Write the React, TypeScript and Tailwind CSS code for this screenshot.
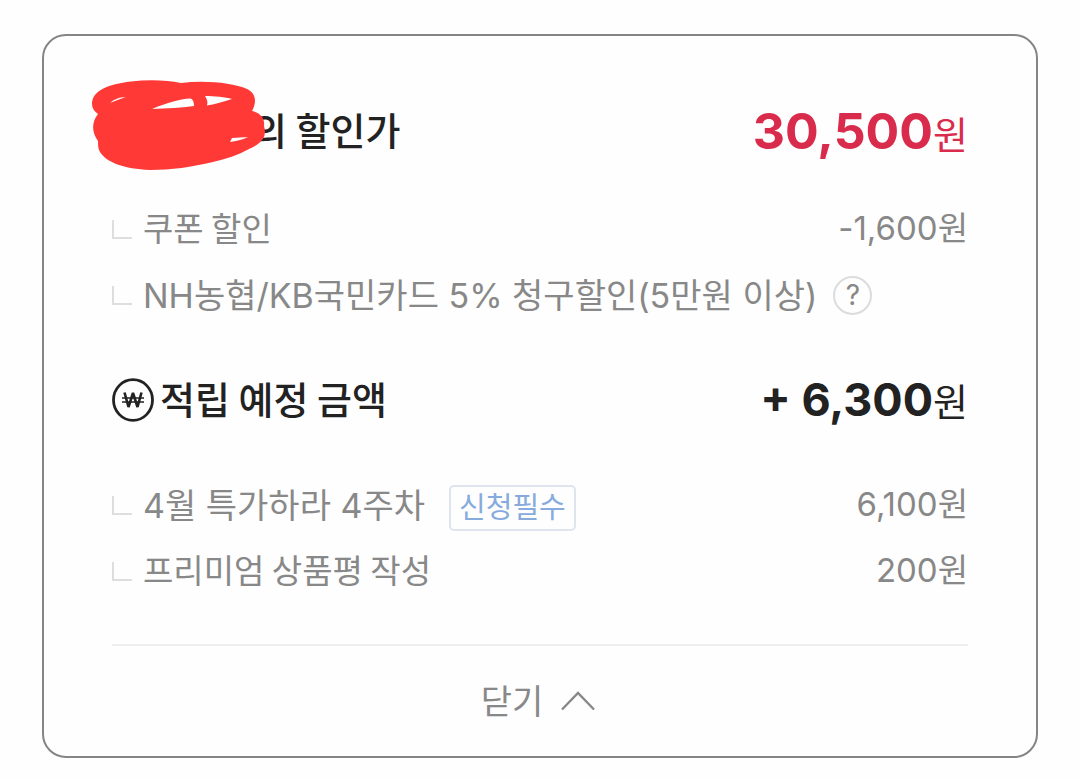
import type { ReactNode } from "react";

function DetailRow({ label, amount, children }: { label: ReactNode; amount?: string; children?: ReactNode }) {
  return (
    <li className="flex h-[66px] items-center text-[34px] font-normal text-[#888888]">
      <span aria-hidden="true" className="mr-[11px] h-[19px] w-5 shrink-0 border-b-2 border-l-2 border-[#dedede]" />
      {label}
      {children}
      {amount && <span className="ml-auto text-[33px]">{amount}</span>}
    </li>
  );
}

function Scribble() {
  return (
    <svg aria-hidden="true" viewBox="0 0 176 92" className="absolute -left-[21px] -top-[18px] h-[92px] w-[176px]">
      <path
        fillRule="evenodd"
        fill="#ff3936"
        d="M1 24C1 11 17 4 40 1.500C57-.5 76 0 90 3C115 0 142 3 156 9C165 13 166 22 161 31C170 33 174 39 173 46C176 56 172 63 158 69C147 75 135 79 122 82C101 87 80 90 59 90C33 89 15 82 9 72C7 69 7 65 7 61C1 53 0 43 7 34C3 31 1 28 1 24ZM61 29C75 23 89 19 99 18.500C102 19 103 22 103 26C90 28 76 28 61 29ZM114 16C124 16 134 17 141 19C134 21 125 24 116 25.500C117 22 116 19 114 16ZM141 58L157 57C151 60 145 61 139 62ZM19 23C22 20 28 17 35 17C29 19 24 21 19 23Z"
      />
    </svg>
  );
}

function WonIcon() {
  return (
    <svg aria-hidden="true" viewBox="0 0 42 44" className="mr-1.5 h-11 w-[42px] shrink-0" fill="none" stroke="#222">
      <ellipse cx="21" cy="22" rx="19.5" ry="20.3" strokeWidth="2.8" />
      <path d="M12.500 14.500L16.500 29L21 15L25.500 29L29.500 14.500" strokeWidth="2.6" strokeLinejoin="bevel" />
      <path d="M10 20H32M10 24H32" strokeWidth="1.6" />
    </svg>
  );
}

export default function App() {
  return (
    <main className="bg-[#fefefe] px-[42px] pb-5 pt-[34px] font-['Inter','Noto_Sans_CJK_KR',sans-serif]">
      <section className="rounded-[24px] border-2 border-[#858585] px-[68px] pt-[62px]">
        <h2 className="flex h-[66px] items-center text-[38px] font-medium text-[#222]">
          <span className="relative h-[66px] w-[140px] shrink-0">
            <span className="absolute inset-0 z-10">
              <Scribble />
            </span>
          </span>
          <span className="pb-1 font-['Noto_Sans_CJK_KR',sans-serif] leading-none">의 할인가</span>
          <span className="ml-auto flex items-baseline text-[#d92b4b]">
            <strong className="text-[50px] font-bold">30,500</strong>
            <span className="font-normal">원</span>
          </span>
        </h2>
        <ul className="mt-8">
          <DetailRow
            label={<span className="pb-1 font-['Noto_Sans_CJK_KR',sans-serif] text-[33px] leading-none">쿠폰 할인</span>}
            amount="-1,600원"
          />
          <DetailRow label={<span>NH농협/KB국민카드 5% 청구할인(5만원 이상)</span>}>
            <button
              type="button"
              aria-label="청구할인 안내"
              className="ml-4 flex size-[39px] shrink-0 items-center justify-center rounded-full border-2 border-[#dcdcdc] text-[28px] font-normal leading-none"
            >
              ?
            </button>
          </DetailRow>
        </ul>

        <h2 className="mt-[39px] flex h-[66px] items-center text-[38px] font-medium text-[#222]">
          <WonIcon />
          <span className="pb-1 font-['Noto_Sans_CJK_KR',sans-serif] leading-none">적립 예정 금액</span>
          <span className="ml-auto flex items-baseline">
            <strong className="text-[45px] font-bold">+ 6,300</strong>
            <span className="font-normal">원</span>
          </span>
        </h2>
        <ul className="mt-[39px]">
          <DetailRow label={<span>4월 특가하라 4주차</span>} amount="6,100원">
            <span className="ml-6 mt-1.5 flex h-[46px] items-center rounded-[5px] border-2 border-[#dfe5ee] px-2 text-[29px] text-[#86abdc]">
              신청필수
            </span>
          </DetailRow>
          <DetailRow
            label={<span className="pb-1 font-['Noto_Sans_CJK_KR',sans-serif] text-[33px] leading-none">프리미엄 상품평 작성</span>}
            amount="200원"
          />
        </ul>

        <div className="mt-10 border-t-2 border-[#eeeeee]">
          <button
            type="button"
            aria-expanded="true"
            className="flex h-[110px] w-full items-center justify-center gap-[18px] pr-1 text-[34px] font-normal text-[#888888]"
          >
            닫기
            <svg aria-hidden="true" viewBox="0 0 34 20" className="h-5 w-[34px]" fill="none" stroke="currentColor" strokeWidth="2.4">
              <path d="M1 18.500L17 2L33 18.500" />
            </svg>
          </button>
        </div>
      </section>
    </main>
  );
}
